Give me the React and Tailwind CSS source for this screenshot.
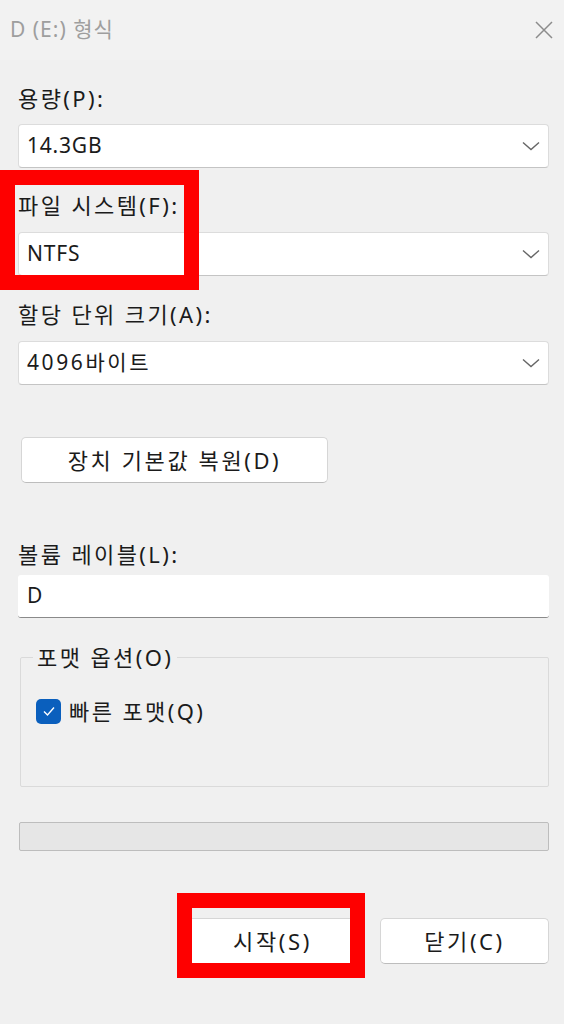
import React from "react";

const font = { fontFamily: "'Noto Sans', 'Noto Sans CJK KR', sans-serif" };

function Chevron() {
  return (
    <svg width="18" height="10" viewBox="0 0 18 10" fill="none">
      <polyline points="1,1.5 9,8.5 17,1.5" stroke="#666" strokeWidth="1.4" />
    </svg>
  );
}

function Combo({ value, wide }) {
  return (
    <div className="h-[44px] bg-white rounded-[4px] border border-[#dcdcdc] border-b-[#c4c4c4] flex items-center justify-between pl-[8px] pr-[8px]">
      <span className={`text-[21px] text-[#1b1b1b] ${wide ? "tracking-[2.6px]" : "tracking-[0.8px]"}`}>{value}</span>
      <Chevron />
    </div>
  );
}

function Label({ children, className = "" }) {
  return (
    <div className={`text-[22px] leading-[26px] text-[#1b1b1b] tracking-[2.4px] ${className}`}>
      {children}
    </div>
  );
}

function Button({ children, className = "" }) {
  return (
    <button className={`h-[46px] bg-white rounded-[5px] border border-[#d6d6d6] border-b-[#bdbdbd] text-[22px] text-[#1b1b1b] tracking-[2.6px] ${className}`}>
      {children}
    </button>
  );
}

export default function App() {
  return (
    <div className="relative w-[564px] h-[1024px] bg-[#f0f0f0] overflow-hidden" style={font}>
      <div className="h-[60px] flex items-center justify-between pl-[10px] pr-[10px] bg-[#f2f2f2]">
        <span className="text-[21px] text-[#9e9e9e] tracking-[1px]">D (E:) 형식</span>
        <svg width="20" height="20" viewBox="0 0 20 20" fill="none">
          <path d="M2 2 L18 18 M18 2 L2 18" stroke="#8c8c8c" strokeWidth="1.5" />
        </svg>
      </div>

      <div className="pl-[18px] pr-[15px]">
        <Label className="mt-[25px]">용량(P):</Label>
        <div className="mt-[13px]">
          <Combo value="14.3GB" />
        </div>

        <Label className="mt-[24px]">파일 시스템(F):</Label>
        <div className="mt-[14px]">
          <Combo value="NTFS" />
        </div>

        <Label className="mt-[25px]">할당 단위 크기(A):</Label>
        <div className="mt-[14px]">
          <Combo value="4096바이트" wide />
        </div>

        <Button className="mt-[52px] ml-[3px] w-[307px] block">장치 기본값 복원(D)</Button>

        <Label className="mt-[58px]">볼륨 레이블(L):</Label>
        <div className="mt-[8px] h-[43px] bg-white rounded-[3px] border-b-[1.5px] border-[#8a8a8a] flex items-center pl-[9px]">
          <span className="text-[21px] text-[#1b1b1b]">D</span>
        </div>

        <fieldset className="mt-[26px] ml-[2px] h-[143px] border border-[#dadada] rounded-[2px] pl-[12px] pr-[12px]">
          <legend className="px-[4px] text-[22px] leading-[26px] text-[#1b1b1b] tracking-[2.4px]">포맷 옵션(O)</legend>
          <div className="mt-[28px] flex items-center gap-[8px] pl-[3px]">
            <span className="w-[25px] h-[25px] rounded-[5px] bg-[#0a5fbd] flex items-center justify-center">
              <svg width="14" height="14" viewBox="0 0 14 14" fill="none">
                <polyline points="2,7.5 5.5,11 12,3.5" stroke="#fff" strokeWidth="1.4" />
              </svg>
            </span>
            <span className="text-[22px] leading-[26px] text-[#1b1b1b] tracking-[2.4px]">빠른 포맷(Q)</span>
          </div>
        </fieldset>

        <div className="mt-[35px] ml-[1px] h-[29px] bg-[#e6e6e6] border-[1.5px] border-[#bdbdbd] rounded-[2px]" />

        <div className="mt-[67px] flex justify-end gap-[23px]">
          <Button className="w-[169px]">시작(S)</Button>
          <Button className="w-[169px]">닫기(C)</Button>
        </div>
      </div>

      <div className="absolute left-0 top-[170px] w-[199px] h-[120px] border-[15px] border-[#fe0000]" />
      <div className="absolute left-[177px] top-[893px] w-[188px] h-[85px] border-[15px] border-[#fe0000]" />
    </div>
  );
}
